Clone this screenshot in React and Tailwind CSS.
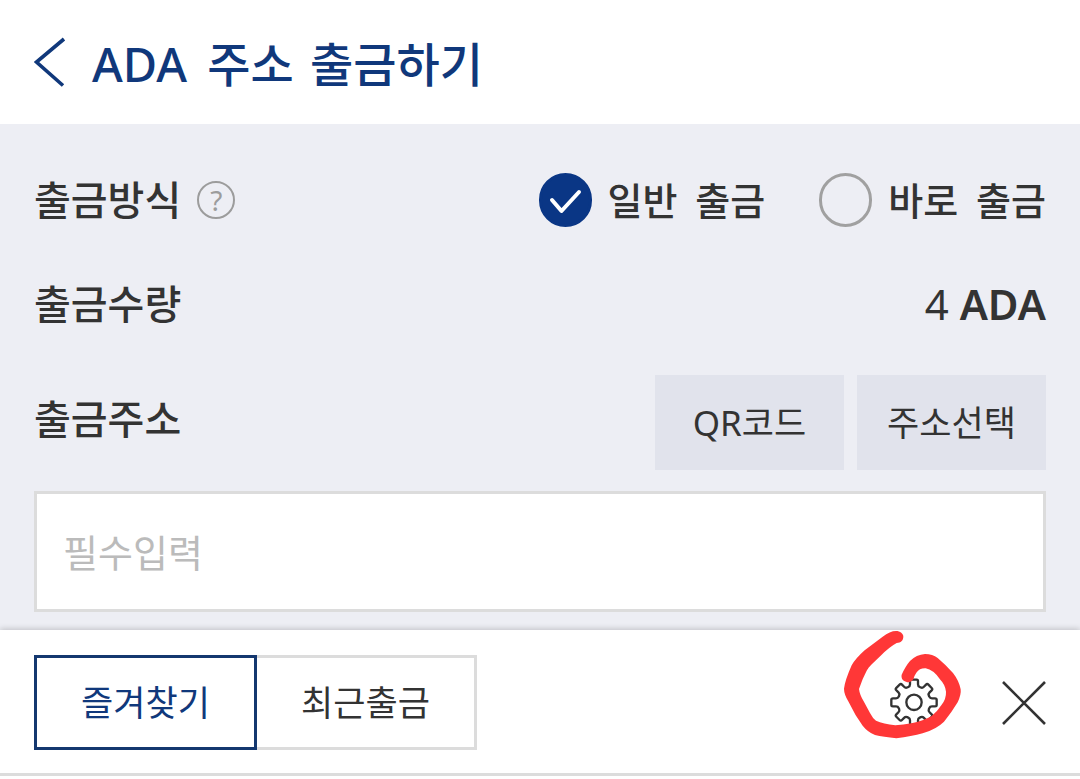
import { useState } from "react";

function gearPath() {
  const parts = [];
  for (let k = 0; k < 8; k++) {
    const a = (k * Math.PI) / 4;
    const p = (x, y) =>
      `${(x * Math.cos(a) - y * Math.sin(a)).toFixed(1)} ${(x * Math.sin(a) + y * Math.cos(a)).toFixed(1)}`;
    parts.push(
      `${k === 0 ? "M" : "L"}${p(-17, -46)} Q${p(-12, -48)} ${p(-12, -54)} L${p(-12, -63)} Q${p(-12, -68)} ${p(-8, -68)} L${p(8, -68)} Q${p(12, -68)} ${p(12, -63)} L${p(12, -54)} Q${p(12, -48)} ${p(17, -46)}`
    );
  }
  return parts.join(" ") + " Z";
}

const GEAR = gearPath();

function GearIcon() {
  return (
    <svg viewBox="-72 -70 144 144" className="size-12 overflow-visible" fill="none" stroke="#333333" strokeWidth="7" strokeLinejoin="round" aria-hidden="true">
      <path d={GEAR} />
      <circle r="23" />
    </svg>
  );
}

function MarkerCircle() {
  return (
    <svg viewBox="60 53 372 348" className="pointer-events-none absolute -left-[50px] -top-[51px] h-[116px] w-[124px] max-w-none" aria-hidden="true">
      <path
        fill="#ff3737"
        d="M228 62 C240 62 251 70 250 80 C249 91 243 97 230 98 Q208 110 182 136 C160 157 147 168 140 181 Q127 205 117 236 Q119 253 131 273 L150 308 Q158 324 168 331 Q190 340 226 345 Q250 344 274 339 Q310 332 335 317 Q352 303 365 283 Q379 265 378 244 Q376 223 361 208 Q340 178 317 174 Q299 173 289 187 Q282 197 280 207 C274 215 266 218 258 214 C248 211 243 203 245 193 Q257 167 270 152 Q289 133 315 131 Q338 131 353 143 Q379 165 399 188 Q417 211 422 237 Q424 253 413 276 Q394 308 372 334 Q350 356 308 369 Q275 378 229 384 Q190 380 165 374 Q143 365 128 346 Q105 315 86 275 Q72 252 72 235 Q75 210 95 165 Q106 145 134 120 L188 79 Q210 62 228 62 Z"
      />
    </svg>
  );
}

function RadioOption({ words, checked, onChange }) {
  return (
    <label className="flex items-center gap-4 text-[38px] font-medium">
      <span className="relative flex">
        <input
          type="radio"
          name="method"
          checked={checked}
          onChange={onChange}
          className="h-[54px] w-[53px] appearance-none rounded-full border-3 border-[#a0a0a0] checked:border-[#0a3685] checked:bg-[#0a3685]"
        />
        {checked && (
          <svg viewBox="0 0 53 54" className="pointer-events-none absolute inset-0 size-full" fill="none" stroke="white" strokeWidth="4" strokeLinecap="round" strokeLinejoin="round" aria-hidden="true">
            <path d="M13 27 L22.500 38 L40 19" />
          </svg>
        )}
      </span>
      <span>
        <span className="mr-2">{words[0]}</span> {words[1]}
      </span>
    </label>
  );
}

export default function App() {
  const [method, setMethod] = useState("normal");
  return (
    <main className="bg-white font-['Noto_Sans','Noto_Sans_CJK_KR',sans-serif] font-normal leading-none text-[#333333]">
      <header className="flex h-[124px] items-center gap-[26px] px-[34px] text-[#10387b]">
        <button type="button" aria-label="뒤로">
          <svg viewBox="0 0 32 52" className="h-[52px] w-8" fill="none" stroke="currentColor" strokeWidth="3.6" aria-hidden="true">
            <path d="M30 3 L2.500 26 L29 49.500" />
          </svg>
        </button>
        <h1 className="pt-1 text-[47px] font-medium">
          <span className="mr-2">ADA</span> <span className="mr-1">주소</span> 출금하기
        </h1>
      </header>

      <section className="bg-[#edeef4] px-[34px] pb-[18px] pt-[49px]">
        <div className="flex h-[54px] items-center justify-between">
          <div className="flex items-center gap-4">
            <h2 className="text-[40px] font-medium">출금방식</h2>
            <button type="button" aria-label="도움말" className="flex size-[38px] items-center justify-center rounded-full border-2 border-[#9c9c9c] text-[28px] text-[#9c9c9c]">
              ?
            </button>
          </div>
          <div className="flex gap-[54px]">
            <RadioOption words={["일반", "출금"]} checked={method === "normal"} onChange={() => setMethod("normal")} />
            <RadioOption words={["바로", "출금"]} checked={method === "direct"} onChange={() => setMethod("direct")} />
          </div>
        </div>

        <div className="mt-[50px] flex h-[54px] items-center justify-between">
          <h2 className="text-[40px] font-medium">출금수량</h2>
          <p className="text-[42px]">
            4 <span className="font-semibold">ADA</span>
          </p>
        </div>

        <div className="mt-11 flex items-center justify-between">
          <label htmlFor="address" className="pb-2 text-[40px] font-medium">출금주소</label>
          <div className="flex gap-[13px] text-[35px]">
            <button type="button" className="h-[95px] w-[189px] bg-[#e1e3ec]">QR코드</button>
            <button type="button" className="h-[95px] w-[189px] bg-[#e1e3ec]">주소선택</button>
          </div>
        </div>

        <input
          id="address"
          type="text"
          placeholder="필수입력"
          className="mt-[21px] block h-[121px] w-full border-3 border-[#dcdcdc] bg-white px-[26px] text-[38px] placeholder:text-[#bbbbbb]"
        />
      </section>

      <section className="relative flex items-center justify-between border-b-3 border-[#dcdcdc] bg-white px-[34px] pb-[23px] pt-[25px] shadow-[0_-1px_6px_rgba(0,0,0,0.2)]">
        <div className="flex text-[35px]">
          <button type="button" aria-pressed="true" className="h-[95px] w-[223px] border-3 border-[#14386f] text-[#10387b]">즐겨찾기</button>
          <button type="button" aria-pressed="false" className="h-[95px] w-[220px] border-3 border-l-0 border-[#dcdcdc]">최근출금</button>
        </div>
        <div className="flex items-center gap-16">
          <div className="relative">
            <button type="button" aria-label="설정" className="block">
              <GearIcon />
            </button>
            <MarkerCircle />
          </div>
          <button type="button" aria-label="닫기">
            <svg viewBox="0 0 44 44" className="size-11" fill="none" stroke="#333333" strokeWidth="2.6" aria-hidden="true">
              <path d="M1 1 L43 43 M43 1 L1 43" />
            </svg>
          </button>
        </div>
      </section>
    </main>
  );
}
